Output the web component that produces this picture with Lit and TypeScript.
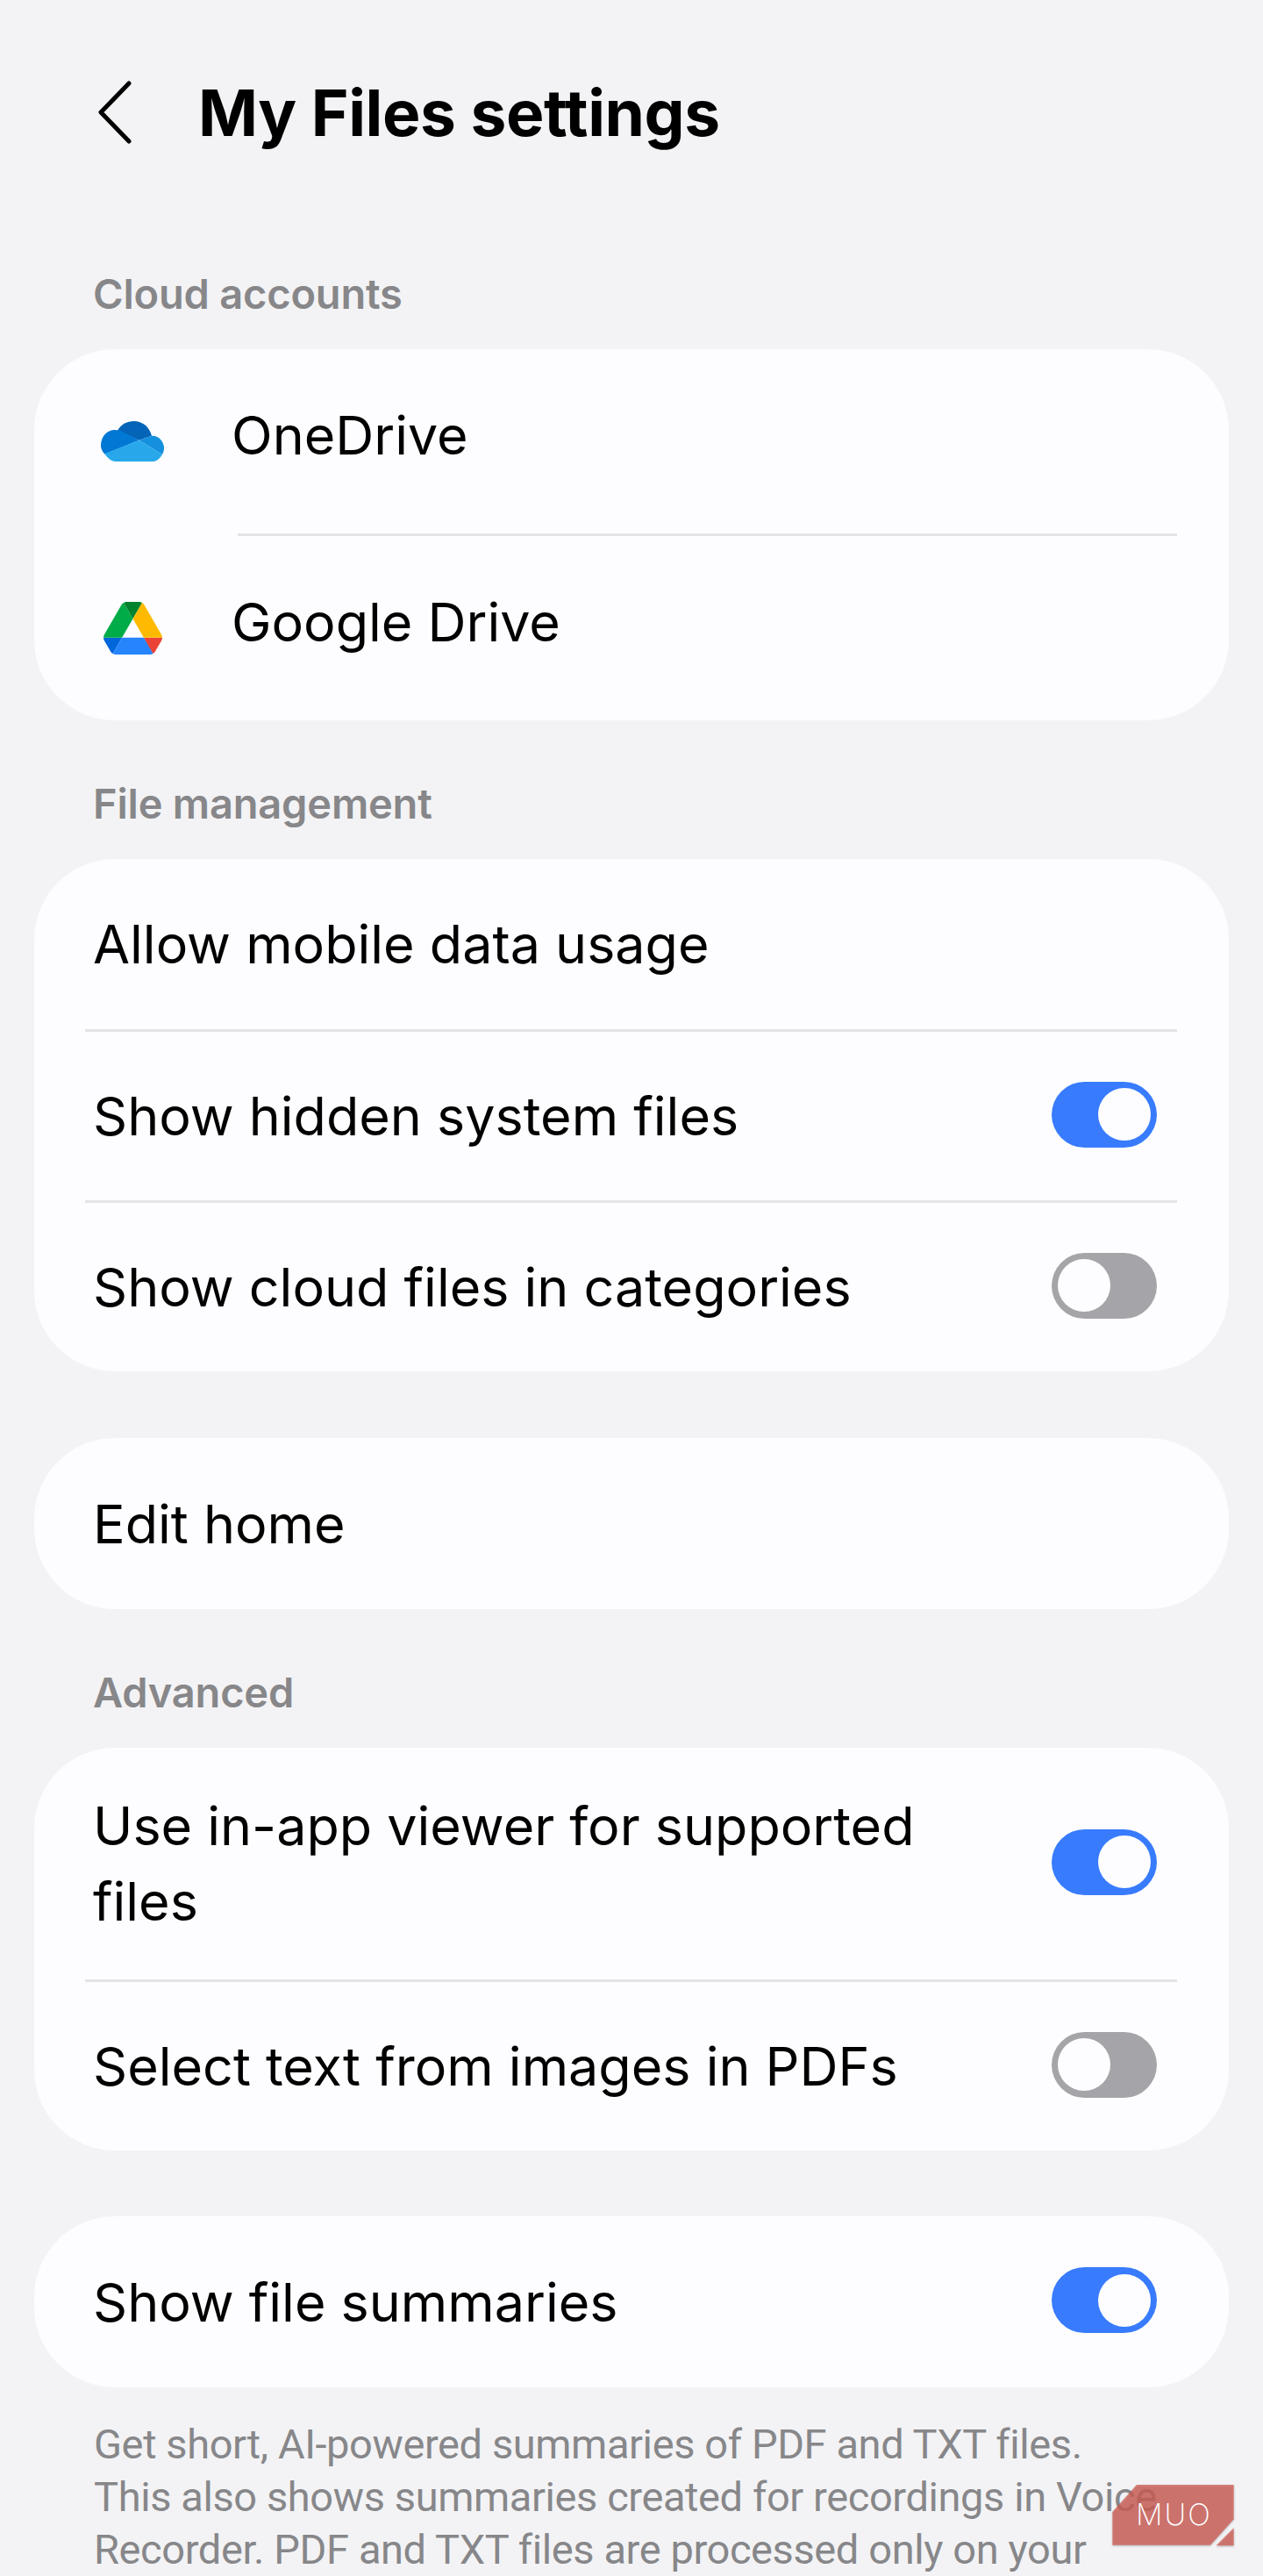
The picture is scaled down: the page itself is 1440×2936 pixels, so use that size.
import { LitElement, html, css, svg } from 'lit';
import { customElement } from 'lit/decorators.js';

const oneDriveIcon = svg`<svg class="icon" width="72" height="46" viewBox="75 88 215 137">
  <path fill="#0364b8" d="M132 119C145 98 165 88 187 88C217 88 241 108 248 138L205 153Z"/>
  <path fill="#0078d4" d="M205 153L142 121C135 119 128 118 122 118C95 118 75 142 75 170C75 182 80 192 88 200Z"/>
  <path fill="#1490df" d="M205 153L248 138C272 135 290 158 290 180C290 188 288 195 284 201Z"/>
  <path fill="#28a8ea" d="M88 199L205 153L284 201C276 215 265 225 250 225H125C110 225 97 213 88 199Z"/>
</svg>`;

const driveIcon = svg`<svg class="icon" width="67" height="60" viewBox="0 0 87.3 78">
  <path fill="#0066da" d="m6.6 66.85 3.85 6.65c.8 1.4 1.95 2.5 3.3 3.3l13.75-23.8h-27.5c0 1.55.4 3.1 1.2 4.5z"/>
  <path fill="#00ac47" d="m43.65 25-13.75-23.8c-1.35.8-2.5 1.9-3.3 3.3l-25.4 44a9.06 9.06 0 0 0 -1.2 4.5h27.5z"/>
  <path fill="#ea4335" d="m73.55 76.8c1.35-.8 2.5-1.9 3.3-3.3l1.6-2.75 7.65-13.25c.8-1.4 1.2-2.95 1.2-4.5h-27.502l5.852 11.5z"/>
  <path fill="#00832d" d="m43.65 25 13.75-23.8c-1.35-.8-2.9-1.2-4.5-1.2h-18.5c-1.6 0-3.15.45-4.5 1.2z"/>
  <path fill="#2684fc" d="m59.8 53h-32.3l-13.75 23.8c1.35.8 2.9 1.2 4.5 1.2h50.8c1.6 0 3.15-.45 4.5-1.2z"/>
  <path fill="#ffba00" d="m73.4 26.5-12.7-22c-.8-1.4-1.95-2.5-3.3-3.3l-13.75 23.8 16.15 28h27.45c0-1.55-.4-3.1-1.2-4.5z"/>
</svg>`;

@customElement('app-root')
export class AppRoot extends LitElement {
  static styles = css`
    :host {
      display: block;
      position: relative;
      width: 1440px;
      height: 2936px;
      overflow: hidden;
      background: #f3f3f5;
      color: #000;
      font-family: Inter, 'Noto Sans', sans-serif;
    }

    .header {
      display: flex;
      align-items: center;
      height: 256px;
      margin-bottom: 16px;
      padding-left: 111px;
    }

    .back {
      display: block;
      margin-right: 76px;
    }

    .title {
      margin: 0;
      font-size: 73px;
      font-weight: 700;
      letter-spacing: -0.4px;
    }

    .label {
      height: 126px;
      margin: 32px 0 0;
      padding-left: 106px;
      line-height: 126px;
      font-size: 47px;
      font-weight: 600;
      color: #87878a;
      letter-spacing: -0.2px;
    }

    .header + .label {
      margin-top: 0;
    }

    .card {
      margin: 0 39px;
      border-radius: 92px;
      background: #fdfdff;
    }

    .card + .card {
      margin-top: 76px;
    }

    .card.tight {
      margin-top: 75px;
    }

    .row {
      display: flex;
      align-items: center;
      justify-content: space-between;
      min-height: 192px;
      padding: 0 82px 0 67px;
      font-size: 61px;
      line-height: 86px;
    }

    .row:first-child {
      min-height: 194px;
    }

    .row:only-child {
      min-height: 195px;
    }

    .row.tall {
      min-height: 264px;
    }

    .row.account {
      justify-content: flex-start;
      min-height: 210px;
      padding-left: 76px;
    }

    .slot {
      display: flex;
      justify-content: center;
      width: 72px;
      margin-right: 77px;
    }

    .icon {
      display: block;
    }

    .row-text {
      max-width: 960px;
    }

    .account .row-text {
      margin-bottom: 14px;
    }

    .divider {
      height: 3px;
      margin: 0 59px 0 58px;
      background: #e4e4e6;
    }

    .divider.inset {
      margin-left: 232px;
    }

    .toggle {
      flex: none;
      display: flex;
      align-items: center;
      box-sizing: border-box;
      width: 120px;
      height: 75px;
      margin-bottom: 4px;
      padding: 0 7px;
      border-radius: 38px;
      background: #a5a5a9;
    }

    .toggle.on {
      justify-content: flex-end;
      background: #387bfd;
    }

    .knob {
      width: 60px;
      height: 60px;
      border-radius: 50%;
      background: #fdfdff;
    }

    .note {
      margin: 0;
      padding: 35px 0 0 107px;
      font-family: Roboto, sans-serif;
      font-size: 47px;
      line-height: 60px;
      letter-spacing: -0.4px;
      color: #87878a;
    }

    .watermark {
      position: absolute;
      left: 1268px;
      top: 2832px;
      width: 139px;
      height: 72px;
    }

    .watermark svg {
      display: block;
      filter: drop-shadow(0 1.5px 1px rgba(90, 90, 90, 0.6));
    }

    .watermark span {
      position: absolute;
      left: 27px;
      top: 14px;
      font-size: 34px;
      line-height: 40px;
      font-weight: 200;
      color: #fff;
      letter-spacing: 2px;
    }
  `;

  private _toggle(on: boolean) {
    return html`<div class="toggle ${on ? 'on' : ''}"><div class="knob"></div></div>`;
  }

  private _row(label: string, on?: boolean, tall = false) {
    return html`
      <div class="row ${tall ? 'tall' : ''}">
        <div class="row-text">${label}</div>
        ${on === undefined ? '' : this._toggle(on)}
      </div>
    `;
  }

  private _account(label: string, icon: unknown) {
    return html`
      <div class="row account">
        <div class="slot">${icon}</div>
        <div class="row-text">${label}</div>
      </div>
    `;
  }

  render() {
    return html`
      <div class="header">
        <svg class="back" width="39" height="72" viewBox="0 0 39 72" fill="none" stroke="#000" stroke-width="5" stroke-linecap="round" stroke-linejoin="round">
          <path d="M36 3L4 36L36 69" />
        </svg>
        <h1 class="title">My Files settings</h1>
      </div>

      <div class="label">Cloud accounts</div>
      <div class="card">
        ${this._account('OneDrive', oneDriveIcon)}
        <div class="divider inset"></div>
        ${this._account('Google Drive', driveIcon)}
      </div>

      <div class="label">File management</div>
      <div class="card">
        ${this._row('Allow mobile data usage')}
        <div class="divider"></div>
        ${this._row('Show hidden system files', true)}
        <div class="divider"></div>
        ${this._row('Show cloud files in categories', false)}
      </div>

      <div class="card">${this._row('Edit home')}</div>

      <div class="label">Advanced</div>
      <div class="card">
        ${this._row('Use in-app viewer for supported files', true, true)}
        <div class="divider"></div>
        ${this._row('Select text from images in PDFs', false)}
      </div>

      <div class="card tight">${this._row('Show file summaries', true)}</div>

      <p class="note">
        Get short, AI-powered summaries of PDF and TXT files.<br />
        This also shows summaries created for recordings in Voice<br />
        Recorder. PDF and TXT files are processed only on your
      </p>

      <div class="watermark">
        <svg width="139" height="72" viewBox="85 97 415 216">
          <path fill="#d65a50" fill-opacity="0.72" d="M168 97H500V215L420 303H85V190Z" />
          <path fill="#d65a50" fill-opacity="0.72" d="M500 245V305H440Z" />
        </svg>
        <span>MUO</span>
      </div>
    `;
  }
}
